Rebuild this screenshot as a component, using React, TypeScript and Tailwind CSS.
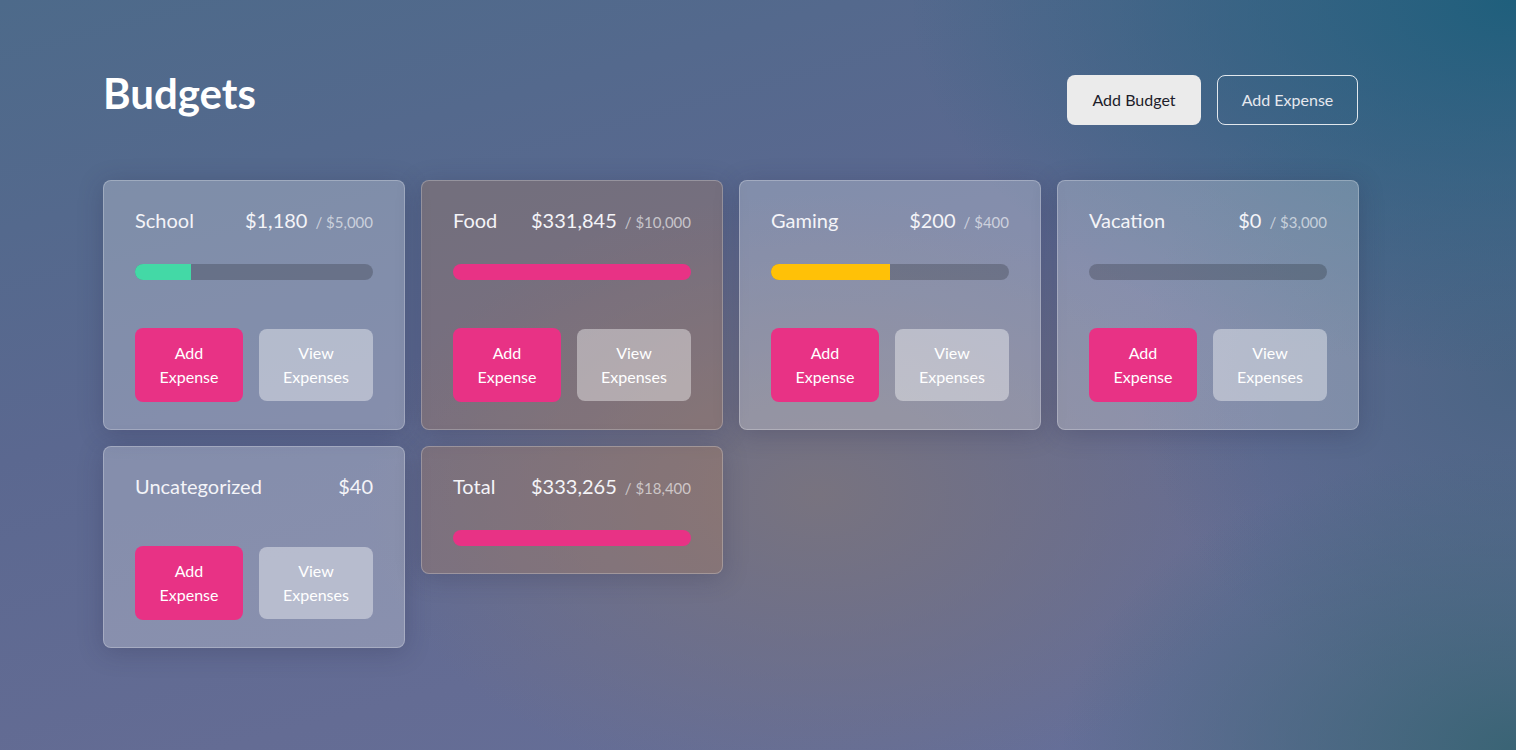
type Budget = {
  name: string;
  amount: number;
  max?: number;
  bar?: string;
  buttons?: boolean;
};

const budgets: Budget[] = [
  { name: "School", amount: 1180, max: 5000, bar: "bg-[#43d9a6]", buttons: true },
  { name: "Food", amount: 331845, max: 10000, bar: "bg-[#e83285]", buttons: true },
  { name: "Gaming", amount: 200, max: 400, bar: "bg-[#ffc107]", buttons: true },
  { name: "Vacation", amount: 0, max: 3000, bar: "bg-[#43d9a6]", buttons: true },
  { name: "Uncategorized", amount: 40, buttons: true },
  { name: "Total", amount: 333265, max: 18400, bar: "bg-[#e83285]" },
];

const fmt = (n: number) => "$" + n.toLocaleString("en-US");

function BudgetCard({ b }: { b: Budget }) {
  const over = b.max !== undefined && b.amount > b.max;
  const pct = b.max ? Math.min(100, (b.amount / b.max) * 100) : 0;

  return (
    <div
      className={`rounded-lg border border-white/25 px-[31px] pt-[25px] pb-[27px] shadow-[0_4px_24px_rgba(40,40,70,0.25)] ${
        over ? "bg-[rgba(190,128,82,0.28)]" : "bg-white/25"
      }`}
    >
      {/* header */}
      <div className="flex items-baseline justify-between text-[#f4f4f8]">
        <div className="text-[20px] leading-[28px]">{b.name}</div>
        <div className="flex items-baseline">
          <span className="text-[20px] leading-[28px]">{fmt(b.amount)}</span>
          {b.max !== undefined && (
            <span className="ml-2 text-[15px] text-white/60">/ {fmt(b.max)}</span>
          )}
        </div>
      </div>

      {b.max !== undefined && (
        <div className="mt-[30px] h-4 w-full overflow-hidden rounded-full bg-black/20">
          <div className={`h-full ${b.bar}`} style={{ width: `${pct}%` }} />
        </div>
      )}

      {b.buttons && (
        <div className={`flex items-center gap-4 ${b.max !== undefined ? "mt-[48px]" : "mt-[46px]"}`}>
          <button className="h-[74px] w-[108px] rounded-lg bg-[#e83285] text-[16px] leading-[24px] text-white">
            Add
            <br />
            Expense
          </button>
          <button className="h-[72px] w-[114px] rounded-lg bg-white/40 text-[16px] leading-[24px] text-white">
            View
            <br />
            Expenses
          </button>
        </div>
      )}
    </div>
  );
}

export default function App() {
  return (
    <div className="min-h-[750px] w-full bg-[radial-gradient(ellipse_40%_50%_at_100%_0%,#1f5f7c_0%,rgba(31,95,124,0)_100%),radial-gradient(ellipse_30%_40%_at_100%_100%,#3a6475_0%,rgba(58,100,117,0)_100%),radial-gradient(ellipse_25%_45%_at_100%_50%,#4a6484_0%,rgba(74,100,132,0)_100%),radial-gradient(ellipse_30%_40%_at_54%_66%,#78737f_0%,rgba(120,115,127,0)_100%),linear-gradient(165deg,#4d6a8a_0%,#5b6890_40%,#646c94_70%,#66709a_100%)] font-['Lato',sans-serif]">
      <div className="pl-[103px] pr-[158px] pt-[75px]">
        {/* top bar */}
        <div className="flex items-start justify-between">
          <h1 className="mt-[-3px] text-[42px] font-bold leading-[42px] text-white">Budgets</h1>
          <div className="flex gap-4">
            <button className="h-[50px] w-[134px] rounded-lg bg-[#ebebeb] text-[16px] text-[#1d1d2a]">
              Add Budget
            </button>
            <button className="h-[50px] w-[141px] rounded-lg border border-white/85 text-[16px] text-[#e6e8ee]">
              Add Expense
            </button>
          </div>
        </div>

        {/* cards */}
        <div className="mt-[55px] grid grid-cols-[repeat(4,302px)] items-start gap-4">
          {budgets.map((b) => (
            <BudgetCard key={b.name} b={b} />
          ))}
        </div>
      </div>
    </div>
  );
}
